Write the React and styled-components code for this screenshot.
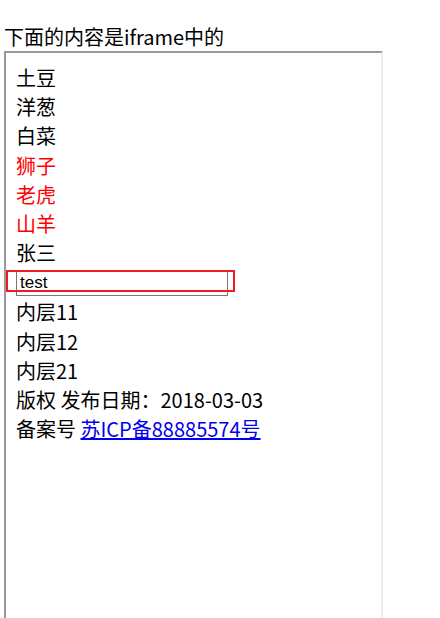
import React from "react";
import styled, { createGlobalStyle } from "styled-components";

const GlobalStyle = createGlobalStyle`
  html, body {
    margin: 0;
    padding: 0;
    background: #ffffff;
    overflow: hidden;
  }
  body {
    font-family: "Noto Sans CJK SC", "Noto Sans", sans-serif;
    font-size: 20px;
    color: #000000;
  }
`;

const Page = styled.div`
  padding-top: 23px;
  display: flex;
  flex-direction: column;
`;

const Heading = styled.div`
  padding-left: 4px;
  line-height: 28px;
`;

const Frame = styled.div`
  margin-left: 4px;
  width: 379px;
  height: 569px;
  box-sizing: border-box;
  border-style: solid;
  border-width: 2px;
  border-color: #9a9a9a #eeeeee #eeeeee #9a9a9a;
  padding: 10px 10px;
  display: flex;
  flex-direction: column;
`;

const Line = styled.div`
  line-height: 29.2px;
  color: ${(p) => (p.$red ? "#ff0000" : "#000000")};
`;

const InputRow = styled.div`
  position: relative;
  height: 30px;
  padding-top: 3px;
  box-sizing: border-box;
`;

const TextInput = styled.input`
  display: block;
  width: 212px;
  height: 26px;
  box-sizing: border-box;
  margin: 0;
  padding: 1px 3px 1px 3px;
  border: 1px solid #767676;
  font-family: "Liberation Sans", Arial, sans-serif;
  font-size: 17px;
  color: #000000;
  background: #ffffff;
  outline: none;
`;

const Highlight = styled.div`
  position: absolute;
  left: -10px;
  top: 3px;
  width: 229px;
  height: 22px;
  box-sizing: border-box;
  border: 2px solid #ed1c24;
  pointer-events: none;
`;

const Link = styled.a`
  color: #0000ee;
  text-decoration: underline;
`;

const items = [
  { id: 1, name: "土豆" },
  { id: 2, name: "洋葱" },
  { id: 3, name: "白菜" },
  { id: 4, name: "狮子", red: true },
  { id: 5, name: "老虎", red: true },
  { id: 6, name: "山羊", red: true },
  { id: 7, name: "张三" },
];

const inner = ["内层11", "内层12", "内层21"];

export default function App() {
  return (
    <Page>
      <GlobalStyle />
      <Heading>下面的内容是iframe中的</Heading>
      <Frame>
        {items.map((item) => (
          <Line key={item.id} $red={item.red}>
            {item.name}
          </Line>
        ))}
        <InputRow>
          <TextInput defaultValue="test" />
          <Highlight />
        </InputRow>
        {inner.map((name) => (
          <Line key={name}>{name}</Line>
        ))}
        <Line>版权 发布日期：2018-03-03</Line>
        <Line>
          备案号 <Link href="#">苏ICP备88885574号</Link>
        </Line>
      </Frame>
    </Page>
  );
}
